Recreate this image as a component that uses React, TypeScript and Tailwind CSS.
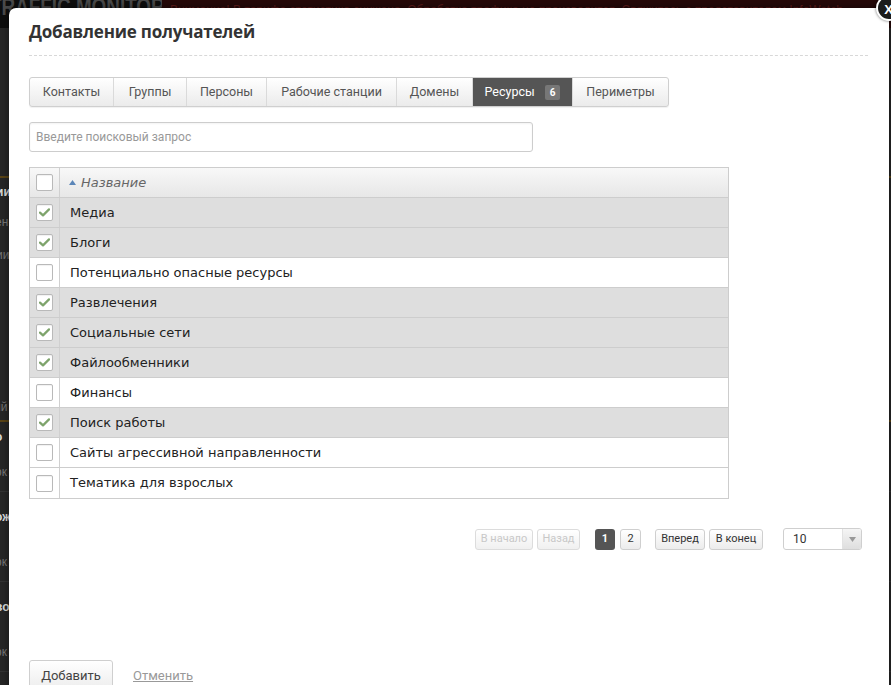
import React from "react";

const rows: { name: string; checked: boolean }[] = [
  { name: "Медиа", checked: true },
  { name: "Блоги", checked: true },
  { name: "Потенциально опасные ресурсы", checked: false },
  { name: "Развлечения", checked: true },
  { name: "Социальные сети", checked: true },
  { name: "Файлообменники", checked: true },
  { name: "Финансы", checked: false },
  { name: "Поиск работы", checked: true },
  { name: "Сайты агрессивной направленности", checked: false },
  { name: "Тематика для взрослых", checked: false },
];

function Check({ checked }: { checked: boolean }) {
  return (
    <div className="w-[17px] h-[17px] rounded-[2px] border border-[#b9b9b9] bg-white flex items-center justify-center shadow-[inset_0_1px_1px_rgba(0,0,0,0.06)]">
      {checked && (
        <svg width="11" height="9" viewBox="0 0 11 9">
          <path d="M1 4.6 L4 7.4 L10 1.4" fill="none" stroke="#7ea46c" strokeWidth="2.2" strokeLinecap="round" strokeLinejoin="round" />
        </svg>
      )}
    </div>
  );
}

const tabs: { label: string; w: string; active?: boolean }[] = [
  { label: "Контакты", w: "w-[84px]" },
  { label: "Группы", w: "w-[73px]" },
  { label: "Персоны", w: "w-[80px]" },
  { label: "Рабочие станции", w: "w-[130px]" },
  { label: "Домены", w: "w-[76px]" },
  { label: "Ресурсы", w: "w-[100px]", active: true },
  { label: "Периметры", w: "w-[95px]" },
];

const btn = "h-[21px] flex items-center justify-center rounded-[3px] border";
const on = "border-[#cfcfcf] text-[#333] bg-gradient-to-b from-white to-[#ececec]";
const off = "border-[#dcdcdc] text-[#c8c8c8] bg-gradient-to-b from-white to-[#f0f0f0]";

export default function App() {
  return (
    <div className="relative w-[891px] h-[685px] overflow-hidden bg-[#262626] font-['Roboto',sans-serif]">
      {/* background page */}
      <div className="flex h-[28px]">
        <div className="w-[162px] bg-[#0e0e0e] overflow-hidden">
          <div className="-mt-[6px] -ml-[10px] origin-left scale-x-[0.82] text-[23px] leading-[26px] font-bold text-[#4a4a4a] whitespace-nowrap font-['Liberation_Sans',sans-serif]">TRAFFIC MONITOR</div>
        </div>
        <div className="flex-1 bg-[#260909] overflow-hidden">
          <div className="pl-[8px] pt-[1px] text-[12px] text-[#5e1b1b] whitespace-nowrap font-['Liberation_Sans',sans-serif]">
            Внимание! В тарифе статистика снижена. Обработка трафика не производится. Свяжитесь с представителем InfoWatch
          </div>
        </div>
      </div>
      <div className="flex flex-col text-[12px] font-bold text-[#777] font-['Liberation_Sans',sans-serif]">
        <div className="h-[150px] border-b-2 border-[#5a4415]" />
        <div className="h-[28px] leading-[28px] text-[#ddd] -ml-[4px]">ии</div>
        <div className="h-[32px] leading-[32px] font-normal -ml-[5px]">ен</div>
        <div className="h-[34px] leading-[34px] font-normal -ml-[4px]">ии</div>
        <div className="h-[150px] font-normal leading-[270px] -ml-[6px] border-b-2 border-[#5a4415]">ий</div>
        <div className="h-[30px] leading-[30px] text-[#ddd] -ml-[5px]">о</div>
        <div className="h-[40px] leading-[40px] font-normal -ml-[5px] border-b border-[#333]">ок</div>
        <div className="h-[50px] leading-[50px] text-[#ddd] -ml-[5px]">ож</div>
        <div className="h-[40px] leading-[40px] font-normal -ml-[5px] border-b border-[#333]">ок</div>
        <div className="h-[50px] leading-[50px] text-[#ddd] -ml-[5px]">во</div>
        <div className="h-[40px] leading-[40px] font-normal -ml-[5px] border-b border-[#333]">ок</div>
      </div>

      {/* modal */}
      <div className="absolute left-[9px] top-[8px] w-[880px] h-[700px] bg-white rounded-[7px] shadow-[0_0_8px_rgba(0,0,0,0.5)]">
        <div className="px-[20px]">
          <div className="pt-[12px] pb-[11px] border-b border-dashed border-[#d8d8d8] mr-[1px]">
            <h1 className="text-[17px] leading-[24px] font-bold text-[#333] tracking-[-0.2px] font-['Open_Sans',sans-serif]">Добавление получателей</h1>
          </div>

          {/* tabs */}
          <div className="mt-[21px] flex w-fit rounded-[3px] border border-[#cfcfcf] bg-gradient-to-b from-white to-[#ebebeb] shadow-[0_1px_1px_rgba(0,0,0,0.06)] overflow-hidden">
            {tabs.map((t, i) => (
              <div
                key={t.label}
                className={`${t.w} h-[28px] flex items-center justify-center gap-[10px] text-[12.5px] ${
                  i < tabs.length - 1 ? "border-r border-[#dadada]" : ""
                } ${t.active ? "bg-[#555] text-white border-[#555]" : "text-[#555]"}`}
              >
                <span>{t.label}</span>
                {t.active && (
                  <span className="bg-[#777] text-white text-[10px] font-bold leading-[15px] px-[5px] rounded-[2px]">6</span>
                )}
              </div>
            ))}
          </div>

          {/* search */}
          <div className="mt-[15px] w-[504px] h-[30px] rounded-[3px] border border-[#cdcdcd] flex items-center px-[6px] text-[12px] text-[#999] shadow-[inset_0_1px_2px_rgba(0,0,0,0.05)]">
            Введите поисковый запрос
          </div>

          {/* table */}
          <div className="mt-[15px] w-[700px] border border-[#cdcdcd] font-['DejaVu_Sans',sans-serif]">
            <div className="flex h-[30px] bg-gradient-to-b from-[#f8f8f8] to-[#e7e7e7] border-b border-[#cdcdcd]">
              <div className="w-[30px] border-r border-[#d0d0d0] flex items-center justify-center">
                <Check checked={false} />
              </div>
              <div className="flex items-center pl-[9px] gap-[5px] text-[13px] italic text-[#666]">
                <svg width="7" height="5" viewBox="0 0 7 5"><path d="M0 5 L3.5 0 L7 5Z" fill="#5b86b8" /></svg>
                <span>Название</span>
              </div>
            </div>
            {rows.map((r, i) => (
              <div
                key={r.name}
                className={`flex h-[30px] ${i < rows.length - 1 ? "border-b border-[#cdcdcd]" : ""} ${
                  r.checked ? "bg-[#dedede]" : "bg-white"
                }`}
              >
                <div className="w-[30px] border-r border-[#d0d0d0] flex items-center justify-center">
                  <Check checked={r.checked} />
                </div>
                <div className="flex items-center pl-[10px] text-[13px] text-[#222]">{r.name}</div>
              </div>
            ))}
          </div>

          {/* pagination */}
          <div className="mt-[29px] flex items-center justify-end pr-[7px] text-[11px]">
            <div className="flex gap-[4px]">
              <span className={`${btn} ${off} w-[58px]`}>В начало</span>
              <span className={`${btn} ${off} w-[43px]`}>Назад</span>
            </div>
            <div className="flex gap-[5px] ml-[15px]">
              <span className="h-[21px] w-[20px] flex items-center justify-center rounded-[3px] bg-[#555] text-white font-bold">1</span>
              <span className={`${btn} ${on} w-[21px]`}>2</span>
            </div>
            <div className="flex gap-[4px] ml-[14px]">
              <span className={`${btn} ${on} w-[50px]`}>Вперед</span>
              <span className={`${btn} ${on} w-[54px]`}>В конец</span>
            </div>
            <div className="ml-[20px] w-[79px] h-[22px] flex rounded-[3px] border border-[#cfcfcf] overflow-hidden">
              <span className="flex-1 flex items-center pl-[9px] text-[12px] text-[#333]">10</span>
              <span className="w-[19px] flex items-center justify-center bg-gradient-to-b from-[#f5f5f5] to-[#dedede] border-l border-[#e2e2e2]">
                <svg width="7" height="5" viewBox="0 0 7 5"><path d="M0 0 L7 0 L3.5 5Z" fill="#999" /></svg>
              </span>
            </div>
          </div>

          {/* footer */}
          <div className="mt-[110px] flex items-center gap-[20px]">
            <span className="h-[32px] w-[84px] flex items-center justify-center rounded-[3px] border border-[#cfcfcf] bg-gradient-to-b from-white to-[#ececec] text-[13px] text-[#444]">Добавить</span>
            <span className="text-[13px] text-[#999] underline">Отменить</span>
          </div>
        </div>
      </div>

      {/* close */}
      <div className="absolute left-[876px] top-[-5px] w-[26px] h-[26px] rounded-full bg-[#1c1c1c] border-2 border-white shadow-[0_0_3px_rgba(0,0,0,0.6)] flex items-center justify-center text-white font-bold text-[13px] leading-none font-['Liberation_Sans',sans-serif]">
        <span className="-ml-[1px] mt-[3px]">X</span>
      </div>
    </div>
  );
}
